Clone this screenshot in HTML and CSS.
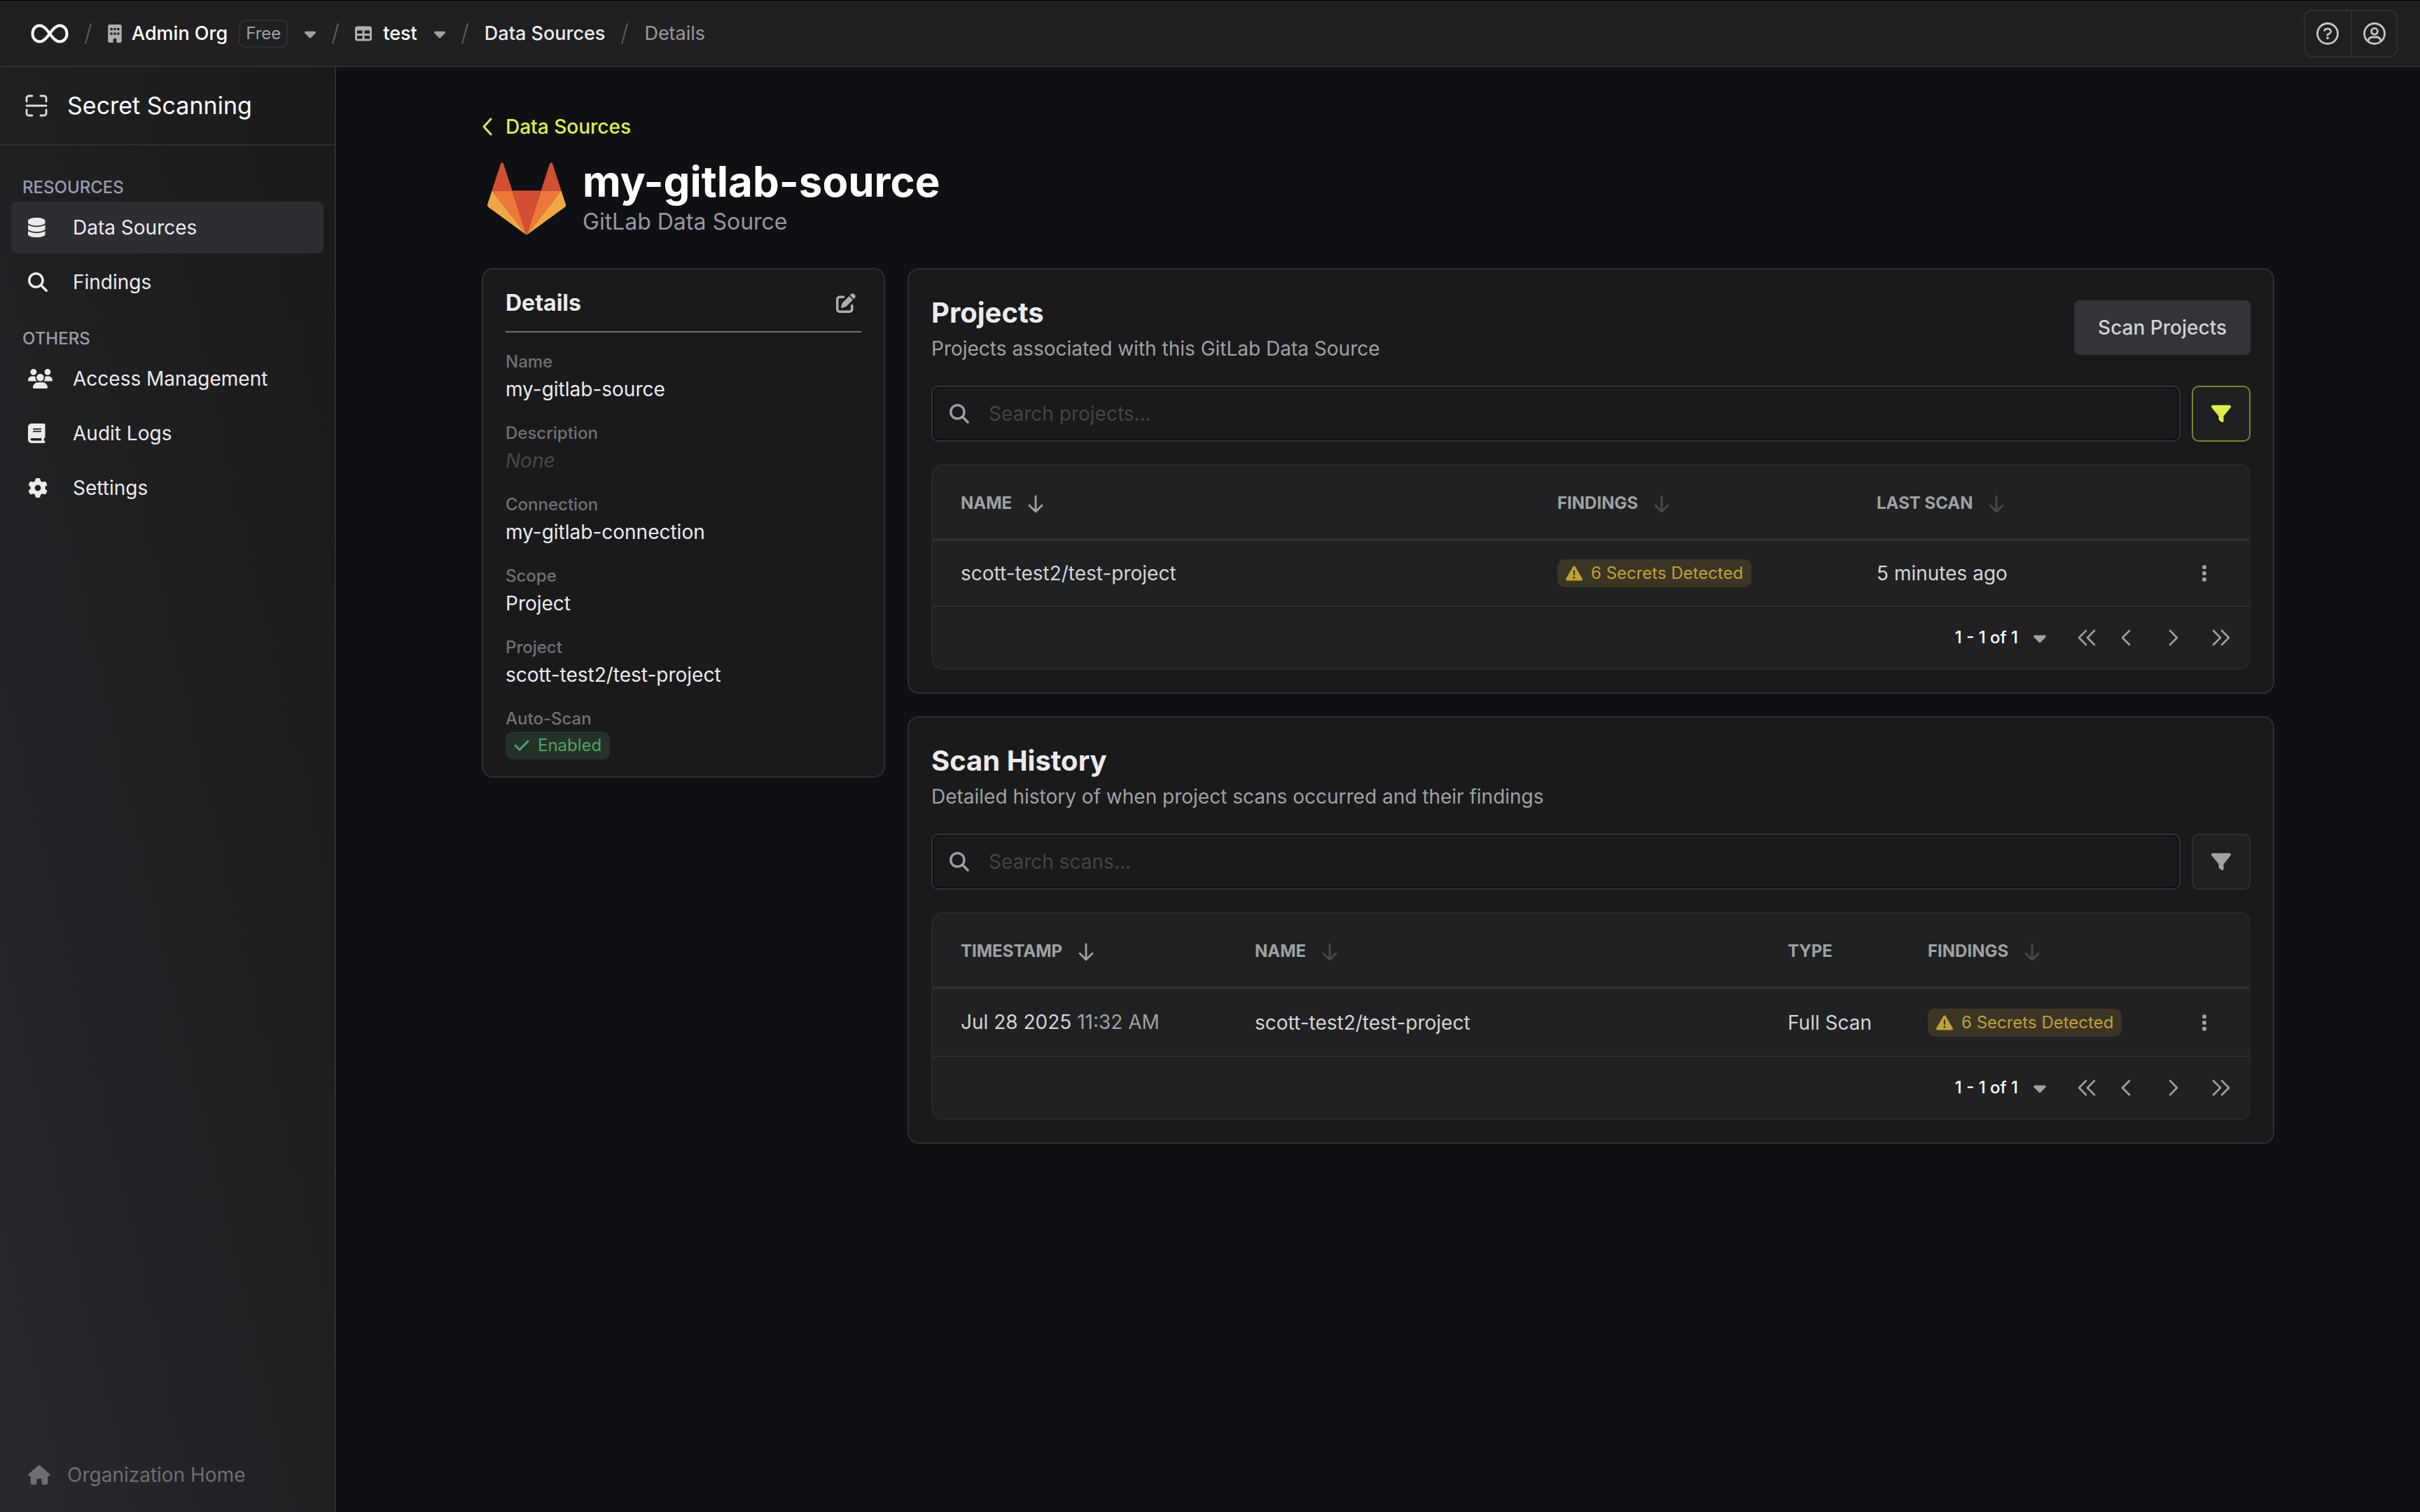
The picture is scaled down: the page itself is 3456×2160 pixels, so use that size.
FILE: index.html
```html
<!DOCTYPE html>
<html lang="en">

<head>
    <meta charset="UTF-8">
    <meta name="viewport" content="width=device-width, initial-scale=1.0">
    <title>my-gitlab-source - Secret Scanning</title>
    <link rel="stylesheet" href="styles.css">
</head>

<body>
    <!-- shared icons -->
    <svg class="sprite" aria-hidden="true">
        <symbol id="i-caret" viewBox="0 0 320 512">
            <path d="M137.4 374.6c12.500 12.500 32.800 12.500 45.300 0l128-128c9.200-9.200 11.900-22.900 6.900-34.900s-16.600-19.800-29.600-19.800L32 192c-12.900 0-24.600 7.800-29.600 19.800s-2.200 25.700 6.900 34.900l128 128z" />
        </symbol>
        <symbol id="i-slash" viewBox="0 0 12 36">
            <path d="M10.500 1.500L1.500 34.500" fill="none" stroke="currentColor" stroke-width="2.600" stroke-linecap="round" />
        </symbol>
        <symbol id="i-search" viewBox="0 0 512 512">
            <path d="M416 208c0 45.900-14.900 88.300-40 122.700L502.600 457.400c12.500 12.500 12.500 32.800 0 45.300s-32.800 12.500-45.300 0L330.700 376c-34.400 25.200-76.800 40-122.700 40C93.100 416 0 322.900 0 208S93.100 0 208 0S416 93.100 416 208zM208 352a144 144 0 1 0 0-288 144 144 0 1 0 0 288z" />
        </symbol>
        <symbol id="i-filter" viewBox="0 0 512 512">
            <path d="M3.900 54.900C10.500 40.900 24.500 32 40 32H472c15.500 0 29.500 8.900 36.100 22.900s4.600 30.500-5.200 42.500L320 320.900V448c0 12.100-6.800 23.200-17.700 28.600s-23.800 4.300-33.500-3l-64-48c-8.100-6-12.800-15.500-12.800-25.600V320.900L9 97.300C-.7 85.400-2.800 68.800 3.900 54.900z" />
        </symbol>
        <symbol id="i-arrow" viewBox="0 0 24 28">
            <path d="M12 3v21M3 16l9 9 9-9" fill="none" stroke="currentColor" stroke-width="2.800" stroke-linecap="round" stroke-linejoin="round" />
        </symbol>
        <symbol id="i-warning" viewBox="0 0 512 512">
            <path d="M256 32c14.200 0 27.300 7.500 34.500 19.800l216 368c7.300 12.400 7.300 27.700 .2 40.100S486.300 480 472 480H40c-14.300 0-27.600-7.700-34.700-20.100s-7-27.800 .2-40.100l216-368C228.700 39.500 241.800 32 256 32zm0 128c-13.300 0-24 10.700-24 24V296c0 13.300 10.700 24 24 24s24-10.700 24-24V184c0-13.300-10.700-24-24-24zm32 224a32 32 0 1 0-64 0 32 32 0 1 0 64 0z" />
        </symbol>
        <symbol id="i-dots" viewBox="0 0 128 512">
            <path d="M64 360a56 56 0 1 0 0 112 56 56 0 1 0 0-112zm0-160a56 56 0 1 0 0 112 56 56 0 1 0 0-112zM120 96A56 56 0 1 0 8 96a56 56 0 1 0 112 0z" />
        </symbol>
        <symbol id="i-first" viewBox="0 0 28 28">
            <path d="M13 4L3 14l10 10M25 4L15 14l10 10" fill="none" stroke="currentColor" stroke-width="2.600" stroke-linecap="round" stroke-linejoin="round" />
        </symbol>
        <symbol id="i-prev" viewBox="0 0 28 28">
            <path d="M19 4L9 14l10 10" fill="none" stroke="currentColor" stroke-width="2.600" stroke-linecap="round" stroke-linejoin="round" />
        </symbol>
        <symbol id="i-next" viewBox="0 0 28 28">
            <path d="M9 4l10 10L9 24" fill="none" stroke="currentColor" stroke-width="2.600" stroke-linecap="round" stroke-linejoin="round" />
        </symbol>
        <symbol id="i-last" viewBox="0 0 28 28">
            <path d="M3 4l10 10L3 24M15 4l10 10-10 10" fill="none" stroke="currentColor" stroke-width="2.600" stroke-linecap="round" stroke-linejoin="round" />
        </symbol>
    </svg>

    <header class="topbar">
        <nav class="breadcrumbs" aria-label="Breadcrumb">
            <a href="#" class="logo" aria-label="Home">
                <svg viewBox="0 0 54 28">
                    <path d="M27 14C21.500 6 17.500 2.500 13 2.500C6.500 2.500 2.500 7.500 2.500 14S6.500 25.500 13 25.500C17.500 25.500 21.500 22 27 14C32.500 6 36.500 2.500 41 2.500C47.500 2.500 51.500 7.500 51.500 14S47.500 25.500 41 25.500C36.500 25.500 32.500 22 27 14Z" fill="none" stroke="currentColor" stroke-width="4" />
                </svg>
            </a>
            <svg class="slash"><use href="#i-slash" /></svg>
            <div class="crumb">
                <svg class="crumb-icon" viewBox="0 0 384 512">
                    <path fill-rule="evenodd" d="M48 0C21.500 0 0 21.500 0 48V464c0 26.500 21.500 48 48 48h96V432c0-26.500 21.500-48 48-48s48 21.500 48 48v80h96c26.500 0 48-21.500 48-48V48c0-26.500-21.500-48-48-48H48zM64 96h64v64H64zM160 96h64v64H160zM256 96h64v64H256zM64 224h64v64H64zM160 224h64v64H160zM256 224h64v64H256z" />
                </svg>
                <a href="#" class="org-name">Admin Org</a>
                <span class="plan">Free</span>
                <button class="caret" aria-label="Switch organization"><svg><use href="#i-caret" /></svg></button>
            </div>
            <svg class="slash"><use href="#i-slash" /></svg>
            <div class="crumb">
                <svg class="crumb-icon wide" viewBox="0 0 512 512">
                    <path d="M64 256V160H224v96H64zm0 64H224v96H64V320zm224 96V320H448v96H288zM448 256H288V160H448v96zM64 32C28.700 32 0 60.700 0 96V416c0 35.300 28.700 64 64 64H448c35.300 0 64-28.700 64-64V96c0-35.300-28.700-64-64-64H64z" />
                </svg>
                <a href="#" class="project-name">test</a>
                <button class="caret" aria-label="Switch project"><svg><use href="#i-caret" /></svg></button>
            </div>
            <svg class="slash"><use href="#i-slash" /></svg>
            <a href="#" class="crumb-link">Data Sources</a>
            <svg class="slash"><use href="#i-slash" /></svg>
            <span class="current">Details</span>
        </nav>
        <div class="top-actions">
            <button aria-label="Help">
                <svg viewBox="0 0 32 32" fill="none" stroke="currentColor" stroke-width="2.800" stroke-linecap="round">
                    <circle cx="16" cy="16" r="14.500" />
                    <path d="M11.500 11.500c.8-1.700 2-2.300 4.200-2.300h.8c2.400 0 4.200 1.500 4.200 3.600 0 1.600-.8 2.500-2.200 3.300L16 17.500v.8" />
                    <circle cx="16" cy="22.300" r="1.900" fill="currentColor" stroke="none" />
                </svg>
            </button>
            <button aria-label="Account">
                <svg viewBox="0 0 32 32" fill="none" stroke="currentColor" stroke-width="2.800">
                    <circle cx="16" cy="16" r="14.500" />
                    <circle cx="16" cy="12.800" r="4.400" />
                    <path d="M7 27.200c.5-3.800 2.800-6.200 6-6.200h6c3.200 0 5.500 2.400 6 6.200" />
                </svg>
            </button>
        </div>
    </header>

    <div class="layout">
        <aside class="sidebar">
            <div class="product">
                <svg viewBox="0 0 32 32" fill="none" stroke="currentColor" stroke-width="2.800" stroke-linecap="round">
                    <path d="M2 10V5a3 3 0 0 1 3-3h5M22 2h5a3 3 0 0 1 3 3v5M30 22v5a3 3 0 0 1-3 3h-5M10 30H5a3 3 0 0 1-3-3v-5M2 16h28" />
                </svg>
                Secret Scanning
            </div>
            <nav class="menu">
                <h2>RESOURCES</h2>
                <a href="#" class="active">
                    <svg viewBox="0 0 448 512">
                        <path d="M448 80v48c0 44.200-100.300 80-224 80S0 172.200 0 128V80C0 35.800 100.300 0 224 0S448 35.800 448 80zM393.200 214.700c20.800-7.400 39.900-16.900 54.800-28.600V288c0 44.200-100.300 80-224 80S0 332.200 0 288V186.100c14.900 11.800 34 21.200 54.800 28.600C99.700 230.700 159.500 240 224 240s124.300-9.300 169.200-25.300zM0 346.100c14.900 11.800 34 21.200 54.800 28.600C99.700 390.700 159.500 400 224 400s124.300-9.300 169.200-25.300c20.800-7.400 39.900-16.900 54.800-28.600V432c0 44.200-100.300 80-224 80S0 476.200 0 432V346.100z" />
                    </svg>
                    <span>Data Sources</span>
                </a>
                <a href="#">
                    <svg viewBox="0 0 512 512"><use href="#i-search" /></svg>
                    <span>Findings</span>
                </a>
                <h2>OTHERS</h2>
                <a href="#">
                    <svg viewBox="0 0 640 512">
                        <path d="M144 0a80 80 0 1 1 0 160A80 80 0 1 1 144 0zM512 0a80 80 0 1 1 0 160A80 80 0 1 1 512 0zM0 298.700C0 239.800 47.800 192 106.700 192h42.700c15.900 0 31 3.500 44.600 9.700c-1.300 7.200-1.900 14.700-1.900 22.300c0 38.200 16.800 72.500 43.300 96c-.2 0-.4 0-.7 0H21.300C9.600 320 0 310.400 0 298.700zM405.300 320c-.2 0-.4 0-.7 0c26.600-23.500 43.300-57.800 43.300-96c0-7.600-.7-15-1.900-22.300c13.600-6.300 28.700-9.700 44.600-9.700h42.700C592.200 192 640 239.800 640 298.700c0 11.800-9.600 21.300-21.300 21.300H405.300zM224 224a96 96 0 1 1 192 0 96 96 0 1 1 -192 0zM128 485.300C128 411.700 187.700 352 261.300 352H378.700C452.300 352 512 411.700 512 485.300c0 14.700-11.900 26.700-26.700 26.700H154.700c-14.700 0-26.700-11.900-26.700-26.700z" />
                    </svg>
                    <span>Access Management</span>
                </a>
                <a href="#">
                    <svg viewBox="0 0 448 512">
                        <path d="M96 0C43 0 0 43 0 96V416c0 53 43 96 96 96H384h32c17.700 0 32-14.300 32-32s-14.300-32-32-32V384c17.700 0 32-14.300 32-32V32c0-17.700-14.300-32-32-32H384 96zm0 384H352v64H96c-17.700 0-32-14.300-32-32s14.300-32 32-32zm32-240c0-8.800 7.200-16 16-16H336c8.800 0 16 7.200 16 16s-7.200 16-16 16H144c-8.800 0-16-7.200-16-16zm16 48H336c8.800 0 16 7.200 16 16s-7.200 16-16 16H144c-8.800 0-16-7.200-16-16s7.200-16 16-16z" />
                    </svg>
                    <span>Audit Logs</span>
                </a>
                <a href="#">
                    <svg viewBox="0 0 512 512">
                        <path d="M495.900 166.600c3.200 8.700 .5 18.400-6.400 24.600l-43.300 39.400c1.100 8.300 1.700 16.800 1.700 25.400s-.6 17.100-1.700 25.400l43.300 39.400c6.900 6.200 9.600 15.900 6.400 24.600c-4.400 11.900-9.700 23.300-15.800 34.300l-4.700 8.100c-6.600 11-14 21.400-22.100 31.200c-5.900 7.200-15.700 9.600-24.500 6.800l-55.700-17.700c-13.400 10.300-28.200 18.900-44 25.400l-12.500 57.100c-2 9.100-9 16.300-18.200 17.800c-13.800 2.300-28 3.500-42.500 3.500s-28.700-1.200-42.500-3.500c-9.200-1.500-16.200-8.700-18.200-17.800l-12.500-57.100c-15.800-6.500-30.600-15.100-44-25.400L83.100 425.900c-8.800 2.800-18.600 .3-24.500-6.800c-8.100-9.800-15.500-20.200-22.100-31.200l-4.700-8.100c-6.100-11-11.400-22.400-15.800-34.300c-3.200-8.700-.5-18.400 6.400-24.600l43.300-39.400C64.600 273.100 64 264.600 64 256s.6-17.100 1.700-25.400L22.400 191.200c-6.900-6.200-9.600-15.900-6.400-24.600c4.400-11.900 9.700-23.300 15.800-34.300l4.700-8.100c6.600-11 14-21.400 22.100-31.200c5.900-7.200 15.700-9.600 24.500-6.800l55.700 17.700c13.400-10.300 28.200-18.900 44-25.400l12.500-57.100c2-9.100 9-16.300 18.200-17.800C227.300 1.200 241.500 0 256 0s28.700 1.200 42.500 3.500c9.200 1.500 16.200 8.700 18.200 17.800l12.500 57.100c15.800 6.500 30.600 15.100 44 25.400l55.700-17.700c8.800-2.800 18.600-.3 24.500 6.800c8.100 9.800 15.500 20.200 22.100 31.200l4.700 8.100c6.100 11 11.400 22.400 15.800 34.300zM256 336a80 80 0 1 0 0-160 80 80 0 1 0 0 160z" />
                    </svg>
                    <span>Settings</span>
                </a>
            </nav>
            <a href="#" class="org-home">
                <svg viewBox="0 0 576 512">
                    <path d="M575.800 255.500c0 18-15 32.100-32 32.100h-32l.7 160.200c0 2.700-.2 5.400-.5 8.100V472c0 22.100-17.900 40-40 40H456c-1.100 0-2.200 0-3.300-.1c-1.400 .1-2.800 .1-4.200 .1H416 392c-22.100 0-40-17.900-40-40V448 384c0-17.700-14.300-32-32-32H256c-17.700 0-32 14.300-32 32v64 24c0 22.100-17.900 40-40 40H160 128.100c-1.500 0-3-.1-4.500-.2c-1.200 .1-2.400 .2-3.600 .2H104c-22.100 0-40-17.900-40-40V360c0-.9 0-1.900 .1-2.800V287.600H32c-18 0-32-14-32-32.100c0-9 3-17 10-24L266.400 8c7-7 15-8 22-8s15 2 21 7L564.800 231.500c8 7 12 15 11 24z" />
                </svg>
                <span>Organization Home</span>
            </a>
        </aside>

        <main>
            <div class="content">
                <a href="#" class="back">
                    <svg viewBox="0 0 16 26">
                        <path d="M13 2L3 13l10 11" fill="none" stroke="currentColor" stroke-width="3" stroke-linecap="round" stroke-linejoin="round" />
                    </svg>
                    Data Sources
                </a>

                <div class="page-header">
                    <svg class="gitlab" viewBox="0 0 256 236">
                        <path fill="#d34f33" d="M128.075 236.075l47.104-144.970H80.970l47.104 144.970z" />
                        <path fill="#ee783a" d="M128.075 236.074L80.970 91.104H14.956l113.119 144.970z" />
                        <path fill="#f0a844" d="M14.956 91.104L.642 135.160a9.752 9.752 0 0 0 3.542 10.903l123.891 90.012-113.120-144.970z" />
                        <path fill="#d34f33" d="M14.956 91.105H80.970L52.601 3.790c-1.460-4.493-7.816-4.492-9.275 0l-28.370 87.315z" />
                        <path fill="#ee783a" d="M128.075 236.074l47.104-144.970h66.015l-113.120 144.970z" />
                        <path fill="#f0a844" d="M241.194 91.104l14.314 44.056a9.752 9.752 0 0 1-3.543 10.903l-123.890 90.012 113.119-144.970z" />
                        <path fill="#d34f33" d="M241.194 91.105h-66.015l28.370-87.315c1.460-4.493 7.816-4.492 9.275 0l28.370 87.315z" />
                    </svg>
                    <div>
                        <h1>my-gitlab-source</h1>
                        <p>GitLab Data Source</p>
                    </div>
                </div>

                <div class="columns">
                    <section class="card details">
                        <div class="details-header">
                            <h3>Details</h3>
                            <button aria-label="Edit details">
                                <svg viewBox="0 0 512 512">
                                    <path d="M471.600 21.700c-21.900-21.900-57.300-21.900-79.200 0L362.300 51.700l97.900 97.900 30.100-30.100c21.900-21.900 21.900-57.300 0-79.200L471.600 21.700zm-299.200 220c-6.100 6.100-10.800 13.600-13.500 21.900l-29.600 88.800c-2.900 8.600-.6 18.100 5.800 24.600s15.900 8.700 24.600 5.800l88.800-29.600c8.200-2.700 15.700-7.400 21.900-13.500L437.700 172.300 339.700 74.300 172.400 241.700zM96 64C43 64 0 107 0 160V416c0 53 43 96 96 96H352c53 0 96-43 96-96V320c0-17.700-14.300-32-32-32s-32 14.300-32 32v96c0 17.700-14.300 32-32 32H96c-17.700 0-32-14.300-32-32V160c0-17.700 14.300-32 32-32h96c17.700 0 32-14.300 32-32s-14.300-32-32-32H96z" />
                                </svg>
                            </button>
                        </div>
                        <dl>
                            <dt>Name</dt>
                            <dd>my-gitlab-source</dd>
                            <dt>Description</dt>
                            <dd class="none">None</dd>
                            <dt>Connection</dt>
                            <dd>my-gitlab-connection</dd>
                            <dt>Scope</dt>
                            <dd>Project</dd>
                            <dt>Project</dt>
                            <dd>scott-test2/test-project</dd>
                            <dt>Auto-Scan</dt>
                            <dd>
                                <span class="badge success">
                                    <svg viewBox="0 0 448 512">
                                        <path d="M438.600 105.400c12.500 12.500 12.500 32.800 0 45.300l-256 256c-12.500 12.500-32.800 12.500-45.300 0l-128-128c-12.500-12.500-12.500-32.800 0-45.300s32.800-12.500 45.300 0L160 338.700 393.400 105.400c12.500-12.500 32.800-12.500 45.300 0z" />
                                    </svg>
                                    Enabled
                                </span>
                            </dd>
                        </dl>
                    </section>

                    <div class="panels">
                        <section class="card panel">
                            <div class="panel-header">
                                <div>
                                    <h2>Projects</h2>
                                    <p>Projects associated with this GitLab Data Source</p>
                                </div>
                                <button class="scan-button">Scan Projects</button>
                            </div>
                            <div class="toolbar">
                                <label class="search">
                                    <svg><use href="#i-search" /></svg>
                                    <input type="text" placeholder="Search projects..." aria-label="Search projects">
                                </label>
                                <button class="filter on" aria-label="Filter projects"><svg><use href="#i-filter" /></svg></button>
                            </div>
                            <div class="table-box">
                                <table>
                                    <thead>
                                        <tr>
                                            <th>NAME <button class="sort on" aria-label="Sort by name"><svg><use href="#i-arrow" /></svg></button></th>
                                            <th class="col-wide">FINDINGS <button class="sort" aria-label="Sort by findings"><svg><use href="#i-arrow" /></svg></button></th>
                                            <th class="col-wide">LAST SCAN <button class="sort" aria-label="Sort by last scan"><svg><use href="#i-arrow" /></svg></button></th>
                                            <th class="col-menu"></th>
                                        </tr>
                                    </thead>
                                    <tbody>
                                        <tr>
                                            <td>scott-test2/test-project</td>
                                            <td><span class="badge warning"><svg><use href="#i-warning" /></svg>6 Secrets Detected</span></td>
                                            <td>5 minutes ago</td>
                                            <td class="col-menu"><button class="dots" aria-label="Options"><svg><use href="#i-dots" /></svg></button></td>
                                        </tr>
                                    </tbody>
                                </table>
                                <div class="pagination">
                                    <span>1 - 1 of 1</span>
                                    <button class="per-page" aria-label="Rows per page"><svg><use href="#i-caret" /></svg></button>
                                    <button class="page" aria-label="First page"><svg><use href="#i-first" /></svg></button>
                                    <button class="page" aria-label="Previous page"><svg><use href="#i-prev" /></svg></button>
                                    <button class="page forward" aria-label="Next page"><svg><use href="#i-next" /></svg></button>
                                    <button class="page forward" aria-label="Last page"><svg><use href="#i-last" /></svg></button>
                                </div>
                            </div>
                        </section>

                        <section class="card panel">
                            <div class="panel-header">
                                <div>
                                    <h2>Scan History</h2>
                                    <p>Detailed history of when project scans occurred and their findings</p>
                                </div>
                            </div>
                            <div class="toolbar">
                                <label class="search">
                                    <svg><use href="#i-search" /></svg>
                                    <input type="text" placeholder="Search scans..." aria-label="Search scans">
                                </label>
                                <button class="filter" aria-label="Filter scans"><svg><use href="#i-filter" /></svg></button>
                            </div>
                            <div class="table-box">
                                <table>
                                    <thead>
                                        <tr>
                                            <th class="col-time">TIMESTAMP <button class="sort on" aria-label="Sort by timestamp"><svg><use href="#i-arrow" /></svg></button></th>
                                            <th>NAME <button class="sort" aria-label="Sort by name"><svg><use href="#i-arrow" /></svg></button></th>
                                            <th class="col-type">TYPE</th>
                                            <th class="col-findings">FINDINGS <button class="sort" aria-label="Sort by findings"><svg><use href="#i-arrow" /></svg></button></th>
                                            <th class="col-menu"></th>
                                        </tr>
                                    </thead>
                                    <tbody>
                                        <tr>
                                            <td class="timestamp">Jul 28 2025 <span>11:32 AM</span></td>
                                            <td>scott-test2/test-project</td>
                                            <td>Full Scan</td>
                                            <td><span class="badge warning"><svg><use href="#i-warning" /></svg>6 Secrets Detected</span></td>
                                            <td class="col-menu"><button class="dots" aria-label="Options"><svg><use href="#i-dots" /></svg></button></td>
                                        </tr>
                                    </tbody>
                                </table>
                                <div class="pagination">
                                    <span>1 - 1 of 1</span>
                                    <button class="per-page" aria-label="Rows per page"><svg><use href="#i-caret" /></svg></button>
                                    <button class="page" aria-label="First page"><svg><use href="#i-first" /></svg></button>
                                    <button class="page" aria-label="Previous page"><svg><use href="#i-prev" /></svg></button>
                                    <button class="page forward" aria-label="Next page"><svg><use href="#i-next" /></svg></button>
                                    <button class="page forward" aria-label="Last page"><svg><use href="#i-last" /></svg></button>
                                </div>
                            </div>
                        </section>
                    </div>
                </div>
            </div>
        </main>
    </div>
</body>

</html>
```
FILE: styles.css
```css
* {
    box-sizing: border-box;
    margin: 0;
    padding: 0;
}

body {
    display: flex;
    flex-direction: column;
    min-height: 100vh;
    background: #0e1014;
    color: #ebebec;
    font-family: Inter, "Liberation Sans", sans-serif;
    font-size: 28px;
    line-height: 42px;
}

a {
    color: inherit;
    text-decoration: none;
}

button {
    background: none;
    border: none;
    color: inherit;
    font: inherit;
    cursor: pointer;
}

svg {
    display: block;
    flex-shrink: 0;
    fill: currentColor;
}

.sprite {
    display: none;
}

/* Top bar */
.topbar {
    display: flex;
    align-items: center;
    justify-content: space-between;
    height: 96px;
    padding: 0 32px 0 44px;
    background: #1f2022;
    border-top: 1px solid #000;
    border-bottom: 2px solid #2d2f33;
}

.breadcrumbs,
.crumb {
    display: flex;
    align-items: center;
}

.breadcrumbs {
    gap: 23px;
    font-size: 27px;
}

.logo svg {
    width: 54px;
    height: 28px;
    color: #fff;
}

.slash {
    width: 10px;
    height: 36px;
    color: #5a5b5e;
}

.crumb-icon {
    width: 20px;
    height: 26px;
    margin-right: 14px;
    color: #adaeb0;
}

.crumb-icon.wide {
    width: 24px;
    margin-right: 16px;
}

.org-name,
.project-name {
    color: #fff;
    font-weight: 500;
}

.plan {
    margin-left: 16px;
    padding: 0 8px;
    border: 2px solid #2d2f33;
    border-radius: 8px;
    color: #a0a1a3;
    font-size: 24px;
    line-height: 36px;
}

.caret {
    margin-left: 24px;
    color: #a0a1a3;
}

.caret svg {
    width: 16px;
    height: 28px;
}

.crumb-link {
    font-weight: 500;
}

.current {
    color: #97989a;
}

.top-actions {
    display: flex;
    border: 2px solid #2d2f33;
    border-radius: 12px;
}

.top-actions button {
    width: 65px;
    height: 64px;
    padding: 0 16px;
    color: #c4c5c7;
}

.top-actions button + button {
    border-left: 2px solid #2d2f33;
}

.top-actions svg {
    width: 32px;
    height: 32px;
    fill: none;
}

/* Sidebar */
.layout {
    display: flex;
    flex: 1;
}

.sidebar {
    display: flex;
    flex-direction: column;
    width: 480px;
    flex-shrink: 0;
    background: linear-gradient(to top right, #28292d, #1f2022 50%, #1a1a1c);
    border-right: 2px solid #2d2f33;
}

.product {
    display: flex;
    align-items: center;
    gap: 28px;
    height: 112px;
    padding: 0 36px;
    border-bottom: 2px solid #2d2f33;
    color: #fff;
    font-size: 34px;
}

.product svg {
    width: 32px;
    height: 32px;
    color: #d9dadb;
    fill: none;
}

.menu {
    flex: 1;
    padding: 16px;
}

.menu h2 {
    padding: 28px 16px 4px;
    color: #9a9cab;
    font-size: 24px;
    font-weight: 500;
    line-height: 32px;
}

.menu a,
.org-home {
    display: flex;
    align-items: center;
    height: 74px;
    padding: 0 24px;
    border-radius: 8px;
}

.menu a + a {
    margin-top: 4px;
}

.menu a.active {
    background: #2d2e32;
}

.menu svg {
    height: 28px;
    margin-right: auto;
}

.menu span {
    width: 334px;
}

.org-home {
    gap: 24px;
    margin: 16px;
    color: #6e6f72;
}

.org-home svg {
    width: 32px;
    height: 28px;
}

/* Page */
main {
    flex: 1;
    padding: 64px;
}

.content {
    max-width: 2560px;
    margin: 0 auto;
}

.back {
    display: inline-flex;
    align-items: center;
    gap: 18px;
    color: #e0ed4c;
    font-weight: 500;
}

.back svg {
    width: 16px;
    height: 26px;
}

.page-header {
    display: flex;
    align-items: center;
    gap: 24px;
    margin: 22px 0 42px;
    padding-left: 8px;
}

.gitlab {
    width: 112px;
    height: 104px;
}

h1 {
    color: #fff;
    font-size: 60px;
    font-weight: 700;
    line-height: 64px;
}

.page-header p {
    margin-top: 2px;
    color: #97989a;
    font-size: 32px;
    line-height: 48px;
}

.columns {
    display: flex;
    align-items: flex-start;
    gap: 32px;
}

.card {
    background: #1a1a1c;
    border: 2px solid #2d2f33;
    border-radius: 16px;
}

/* Details card */
.details {
    width: 576px;
    flex-shrink: 0;
    padding: 24px 32px;
}

.details-header {
    display: flex;
    align-items: center;
    justify-content: space-between;
    padding-bottom: 16px;
    border-bottom: 2px solid #707174;
}

.details-header button {
    padding: 0 8px;
    color: #adaeb0;
}

.details-header svg {
    width: 28px;
    height: 28px;
}

h3 {
    font-size: 32px;
    font-weight: 700;
    line-height: 48px;
}

dt {
    margin-top: 24px;
    color: #707174;
    font-size: 24px;
    font-weight: 500;
    line-height: 36px;
}

dd.none {
    color: #48494d;
    font-style: italic;
}

.badge {
    display: flex;
    align-items: center;
    gap: 12px;
    width: max-content;
    height: 40px;
    padding: 0 12px;
    border-radius: 10px;
    font-size: 24px;
}

.success {
    background: #25322a;
    color: #51a266;
}

.success svg {
    width: 22px;
    height: 24px;
}

.warning {
    background: #3b3525;
    color: #c0a138;
}

.warning svg {
    width: 24px;
    height: 24px;
}

/* Panels */
.panels {
    display: flex;
    flex: 1;
    flex-direction: column;
    gap: 32px;
}

.panel {
    padding: 32px;
}

.panel-header {
    display: flex;
    align-items: center;
    justify-content: space-between;
}

.panel h2 {
    font-size: 40px;
    font-weight: 700;
    line-height: 60px;
}

.panel p {
    color: #a0a1a3;
}

.scan-button {
    height: 78px;
    padding: 0 34px;
    background: #323439;
    border-radius: 8px;
    color: #d0d1d3;
    font-weight: 500;
}

.toolbar {
    display: flex;
    gap: 16px;
    margin: 32px 0;
}

.search {
    display: flex;
    align-items: center;
    flex: 1;
    gap: 28px;
    height: 80px;
    padding: 0 24px;
    border: 2px solid #323439;
    border-radius: 10px;
    box-shadow: inset 0 0 0 2px #0f1016;
    color: #9a9ca8;
}

.search svg {
    width: 28px;
    height: 28px;
}

.search input {
    flex: 1;
    background: none;
    border: none;
    outline: none;
    color: #ebebec;
    font: inherit;
}

.search input::placeholder {
    color: #43454c;
}

.filter {
    display: flex;
    align-items: center;
    justify-content: center;
    width: 84px;
    background: #1f2022;
    border: 2px solid #2d2f33;
    border-radius: 10px;
    color: #a0a1a3;
}

.filter.on {
    border-color: #7c842c;
    color: #e0ed4c;
}

.filter svg {
    width: 28px;
    height: 28px;
}

.table-box {
    background: #1f2123;
    border: 2px solid #27282b;
    border-radius: 16px;
}

table {
    width: 100%;
    border-spacing: 0;
    table-layout: fixed;
}

th {
    height: 108px;
    padding: 4px 40px 0;
    border-bottom: 4px solid #2d2f33;
    color: #a0a1a3;
    font-size: 24px;
    font-weight: 700;
    text-align: left;
}

td {
    padding: 26px 40px;
    border-bottom: 2px solid #2d2f33;
    color: #d3d4d6;
    line-height: 40px;
    white-space: nowrap;
}

.sort {
    margin-left: 16px;
    color: #48494d;
    vertical-align: middle;
}

.sort.on {
    color: #a0a1a3;
}

.sort svg {
    width: 24px;
    height: 28px;
}

.col-wide {
    width: 456px;
}

.col-time {
    width: 420px;
}

.col-type {
    width: 200px;
}

.col-findings {
    width: 383px;
}

.col-menu {
    width: 116px;
}

.timestamp {
    line-height: 43px;
}

.timestamp span {
    color: #a0a1a3;
}

td.col-menu {
    padding: 0 40px;
}

.dots {
    display: block;
    padding: 0 8px;
    color: #a0a1a3;
}

.dots svg {
    width: 8px;
    height: 28px;
}

.pagination {
    display: flex;
    align-items: center;
    justify-content: flex-end;
    height: 88px;
    padding-right: 12px;
    color: #a0a1a3;
}

.pagination span {
    color: #fff;
    font-size: 24px;
    font-weight: 500;
}

.per-page {
    padding: 0 30px 0 22px;
}

.per-page svg {
    width: 18px;
    height: 28px;
}

.page {
    width: 56px;
    padding: 0 14px;
}

.page svg {
    width: 28px;
    height: 28px;
}

.forward {
    margin-left: 12px;
}
```
